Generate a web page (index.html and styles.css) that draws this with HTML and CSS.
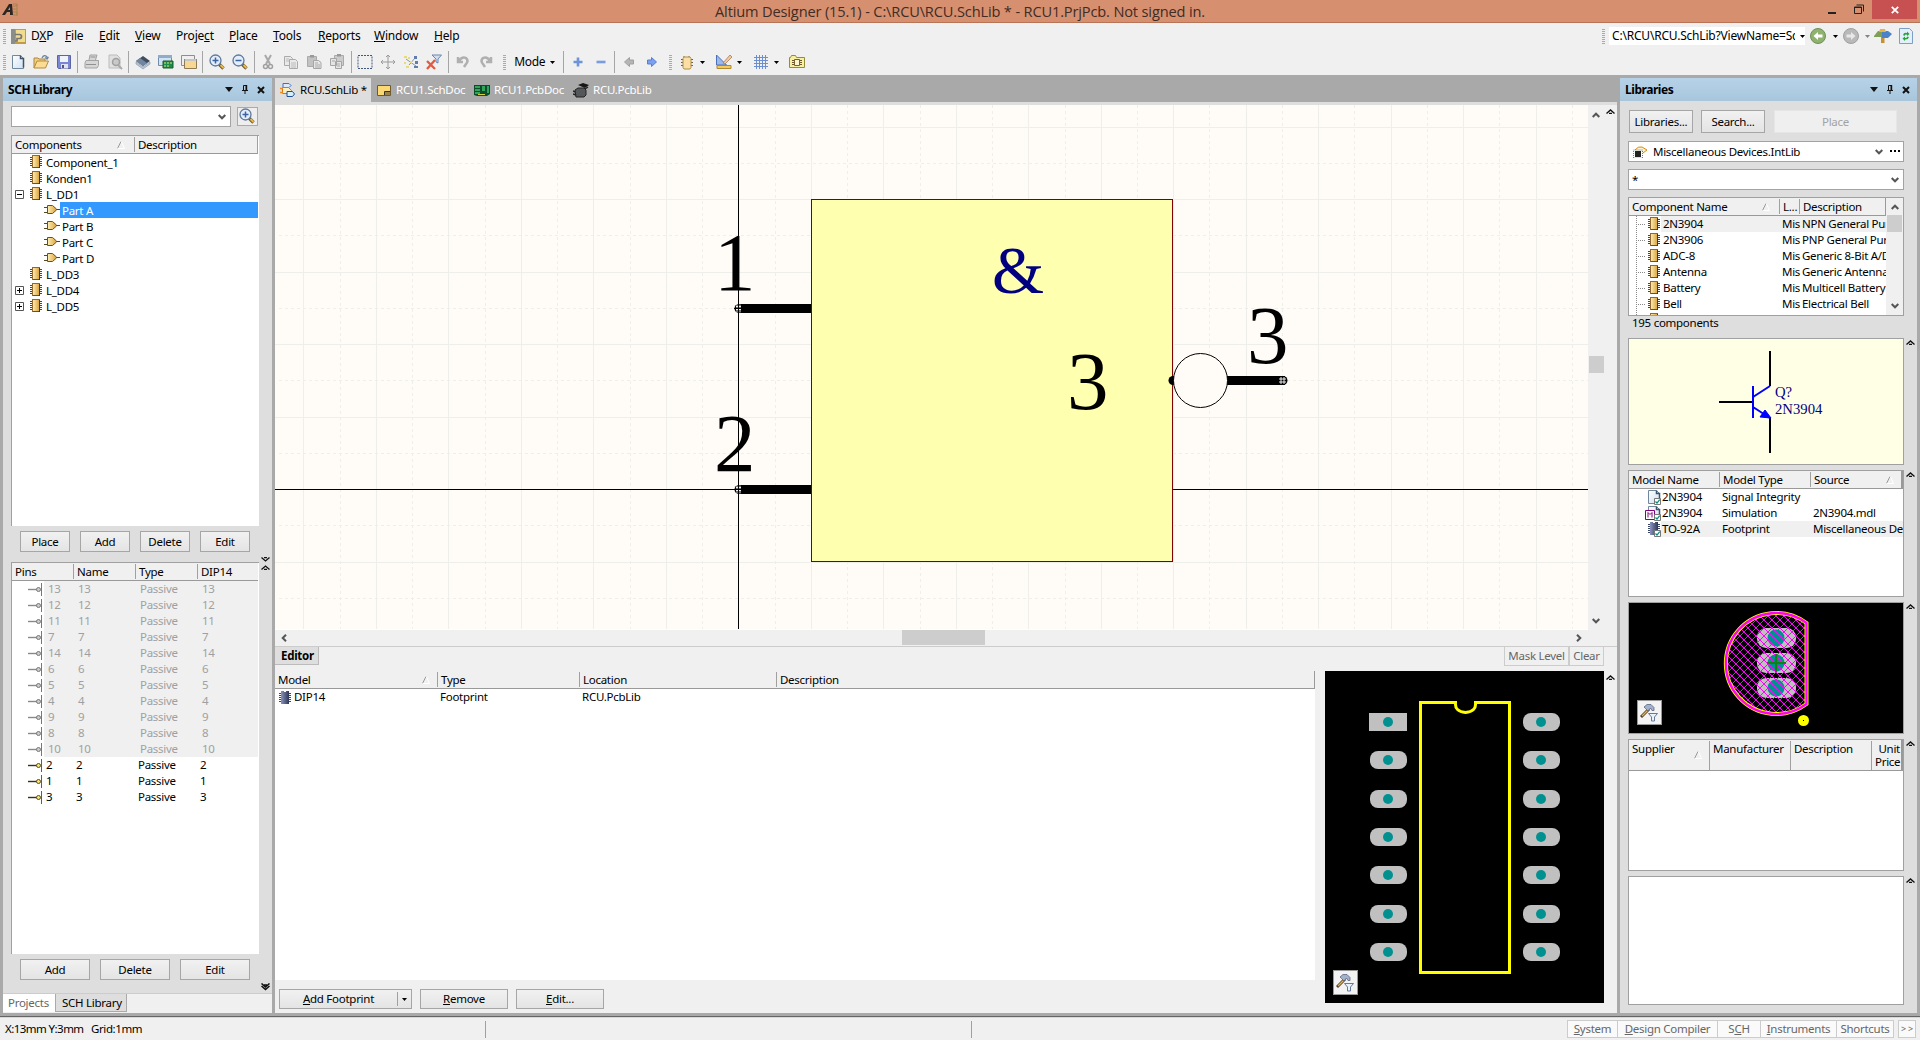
FILE: index.html
```html
<!DOCTYPE html>
<html lang="en">
<head>
<meta charset="utf-8">
<title>Altium Designer</title>
<link rel="stylesheet" href="styles.css">
</head>
<body>
<svg class="defs" width="0" height="0" aria-hidden="true">
  <defs>
    <linearGradient id="gold" x1="0" x2="1"><stop offset="0" stop-color="#fdf0b8"/><stop offset="1" stop-color="#dca23c"/></linearGradient>
    <linearGradient id="navy" x1="0" x2="1"><stop offset="0" stop-color="#8a93bd"/><stop offset="1" stop-color="#2c3858"/></linearGradient>
    <linearGradient id="page" x1="0" y1="0" x2="1" y2="1"><stop offset="0" stop-color="#fff"/><stop offset="1" stop-color="#cfe0f2"/></linearGradient>
    <symbol id="chip" viewBox="0 0 12 13"><path d="M0 2.5h12M0 4.5h12M0 6.5h12M0 8.5h12M0 10.5h12" stroke="#5a4624"/><rect x="2.5" y=".5" width="7" height="12" fill="url(#gold)" stroke="#94682a"/><path d="M9.5 1v12H3" fill="none" stroke="#4a3414"/></symbol>
    <symbol id="chipblue" viewBox="0 0 12 13"><path d="M0 2.5h12M0 4.5h12M0 6.5h12M0 8.5h12M0 10.5h12" stroke="#3c4566"/><path d="M2 0h3v1h2V0h3v13H2z" fill="url(#navy)"/></symbol>
    <symbol id="gate" viewBox="0 0 16 10"><path d="M0 2.5h4M0 7.5h4M12 4.5h4" stroke="#5a4624"/><path d="M3.5.5h5l4 3.5v1l-4 3.500h-5z" fill="url(#gold)" stroke="#6d4d20"/></symbol>
    <symbol id="pin" viewBox="0 0 14 13"><path d="M0 6.500h9" stroke="#3a3020" stroke-width="1.4"/><circle cx="10.500" cy="6.500" r="2" fill="#f4e878" stroke="#5a4a20"/><path d="M13.500 0v13" stroke="#6b5a48"/></symbol>
    <symbol id="pinoff" viewBox="0 0 14 13"><path d="M0 6.500h9" stroke="#888" stroke-width="1.4"/><circle cx="10.500" cy="6.500" r="2" fill="#ccc" stroke="#777"/><path d="M13.500 0v13" stroke="#777"/></symbol>
    <symbol id="down" viewBox="0 0 8 6"><path d="M.7 1 4 4.300 7.300 1" fill="none" stroke="#555" stroke-width="2"/></symbol>
    <symbol id="up" viewBox="0 0 8 6"><path d="M.7 5 4 1.700 7.300 5" fill="none" stroke="#555" stroke-width="2"/></symbol>
    <symbol id="fold" viewBox="0 0 9 5"><path d="M.5 4.500 4.500.9l4 3.600M3 4.500h3" fill="none" stroke="#111" stroke-width="1.300"/></symbol>
    <symbol id="caret" viewBox="0 0 5 3"><path d="M0 0h5L2.500 3z" fill="#000"/></symbol>
    <symbol id="sort" viewBox="0 0 8 8"><path d="M.5 7.500 4 .5" stroke="#999"/><path d="m4.300.5 3.200 7H.5" fill="none" stroke="#fff"/></symbol>
    <symbol id="menutri" viewBox="0 0 8 5"><path d="M0 0h8L4 5z" fill="#111"/></symbol>
    <symbol id="tack" viewBox="0 0 8 9"><path d="M1 5.500h6M4 5.500V9M2.500 5V.5h3V5" fill="none" stroke="#111"/><path d="M4.500 0h1.700v5H4.500z" fill="#111"/></symbol>
    <symbol id="cross" viewBox="0 0 8 8"><path d="m1 1 6 6M7 1 1 7" stroke="#111" stroke-width="2"/></symbol>
    <symbol id="lens" viewBox="0 0 16 16"><path d="m9.500 9.500 5 5" stroke="#6d5a30" stroke-width="3.400"/><path d="m11.500 11 3 3" stroke="#e8b93e" stroke-width="2"/><circle cx="6.500" cy="6.500" r="5.500" fill="#e3eefb" stroke="#60789c" stroke-width="1.300"/></symbol>
    <symbol id="leaf" viewBox="0 0 14 15"><path d="M1.500 1.500h8l3 3v10h-11z" fill="url(#page)" stroke="#71879e"/><path d="M9.500 1.500v3h3v9" fill="none" stroke="#3c536e" stroke-width="1.500"/></symbol>
    <symbol id="checked" viewBox="0 0 7 7"><path d="M.5.500h6v6h-6z" fill="#fff" stroke="#777"/><path d="m1.500 3.500 1.500 1.600L5.700 1.700" fill="none" stroke="#078a80" stroke-width="1.300"/></symbol>
    <symbol id="hammer" viewBox="0 0 18 18"><path d="m1 13 8-8" stroke="#443a34" stroke-width="3"/><path d="m2 12 6-6" stroke="#e4b050" stroke-width="1.400"/><path d="m4 3 3-2.500h4l3 3v3h-2L10.500 4 8 7 5.500 4.500z" fill="#a3b2ca" stroke="#4a5a78" stroke-width=".7"/><path d="M8.500 9.500h9l-3 3.500v4h-3v-4z" fill="#eaf1fa" stroke="#667a9a"/></symbol>
    <symbol id="plusbox" viewBox="0 0 9 9"><path d="M.5.500h8v8h-8z" fill="#fff" stroke="#555"/><path d="M2 4.500h5M4.500 2v5" stroke="#000"/></symbol>
    <symbol id="minusbox" viewBox="0 0 9 9"><path d="M.5.500h8v8h-8z" fill="#fff" stroke="#555"/><path d="M2 4.500h5" stroke="#000"/></symbol>
  </defs>
</svg>

<header class="titlebar">
  <svg class="logo" viewBox="0 0 16 16" width="16" height="16"><path d="M0 13 7 2h3l1 11H8v-3H5l-2 3z" fill="#2a2723"/><path d="M6 8h2V5z" fill="#d69070"/><path d="M11 2h4v2h-4m0 3h4m-4 3h4v3h-4M15 2v12" fill="none" stroke="#a8854c"/></svg>
  <h1>Altium Designer (15.1) - C:\RCU\RCU.SchLib * - RCU1.PrjPcb. Not signed in.</h1>
  <div class="winbtns">
    <svg viewBox="0 0 10 11" width="10" height="11"><path d="M1 9h8" stroke="#222" stroke-width="2"/></svg>
    <svg viewBox="0 0 10 10" width="10" height="10"><path d="M.5 3h7v6.500h-7zM.5 3.500h7M2.500 1h7v6.500" fill="none" stroke="#222"/></svg>
    <span class="close"><svg viewBox="0 0 8 8" width="8" height="8"><path d="m.8.800 6.400 6.400M7.200.800.800 7.200" stroke="#fff" stroke-width="1.800"/></svg></span>
  </div>
</header>

<nav class="menubar">
  <i class="grip"></i>
  <svg class="dxp" viewBox="0 0 15 15" width="15" height="15"><path d="M0 0h15v15H0z" fill="#c29b44"/><path d="M5 1h9v12H5z" fill="#f1dc8e"/><path d="M0 0h4v15H0z" fill="#8b8d88"/><path d="M4 5.500h4.500q2 0 2 2t-2 2H6V12H4" fill="none" stroke="#777" stroke-width="1.700"/></svg>
  <div class="menus"><span>D<u>X</u>P</span><span><u>F</u>ile</span><span><u>E</u>dit</span><span><u>V</u>iew</span><span>Proje<u>c</u>t</span><span><u>P</u>lace</span><span><u>T</u>ools</span><span><u>R</u>eports</span><span><u>W</u>indow</span><span><u>H</u>elp</span></div>
  <div class="address">
    <i class="grip"></i>
    <div class="path"><span>C:\RCU\RCU.SchLib?ViewName=Sch</span><svg width="5" height="3"><use href="#caret"/></svg></div>
    <svg class="ball" viewBox="0 0 16 16" width="16" height="16"><circle cx="8" cy="8" r="7.500" fill="#8fb270" stroke="#6f9057"/><path d="M3.500 8 8 4v2.500h4.500v3H8V12z" fill="#fff"/></svg>
    <svg class="c1" width="5" height="3"><use href="#caret"/></svg>
    <svg class="ball" viewBox="0 0 16 16" width="16" height="16"><circle cx="8" cy="8" r="7.500" fill="#b9b9b9" stroke="#a0a0a0"/><path d="M12.500 8 8 4v2.500H3.500v3H8V12z" fill="#e8e8e8"/></svg>
    <svg class="c2" width="5" height="3" opacity=".45"><use href="#caret"/></svg>
    <svg viewBox="0 0 18 16" width="18" height="16"><path d="M7 1h3.500v14H7z" fill="#c9912e"/><path d="m0 8 4-5h5l-1 6H0z" fill="#7fa052"/><path d="M8 3h6l4 3-4 4H8z" fill="#4c82c8"/><path d="M6 1h5l1 3H5z" fill="#e5b44c"/></svg>
    <svg class="refresh" viewBox="0 0 14 16" width="14" height="16"><path d="M.5.500h10l3 3v12H.5z" fill="#e3effa" stroke="#7d9fc4"/><path d="M4 7q1-3 4-2V3.500L10.500 6 8 8V6.700Q6 6 5.500 8zM10 9q-1 3-4 2.500V13l-2.500-2.500L6 8.500v1.300q2 .5 2.500-1.300z" fill="#27a535"/></svg>
  </div>
</nav>

<div class="toolbar">
  <i class="grip"></i>
  <div class="tools">
    <svg viewBox="0 0 16 16"><use href="#leaf" x="1" width="14" height="15"/></svg>
    <svg viewBox="0 0 16 16"><path d="M1 14V4h4l1 1h6v3" fill="#f6cf7a" stroke="#a98842"/><path d="m1 14 3-7h11.500l-3 7z" fill="#fbdc94" stroke="#b18b40"/><path d="M9 4q2-4 5-1v2m-2-1.500L14 5l1.500-2" fill="none" stroke="#6f86a8" stroke-width="1.300"/></svg>
    <svg viewBox="0 0 16 16"><path d="M1.500 1.500h13v13h-12l-1-1z" fill="#7b86d4" stroke="#5b659e"/><path d="M4 2h8v6H4z" fill="#f0f3fb"/><path d="M5 10h7v4.500H5z" fill="#dfe3ef"/><path d="M6 11h2v3H6z" fill="#4f5680"/></svg>
    <i class="sep"></i>
    <svg viewBox="0 0 16 16"><path d="m5 6 1-5h7l-1.500 5M2 6.500h12.500v5L13 14H1V9z" fill="#d6d6d6" stroke="#a3a3a3"/><path d="M2 10.500h10M6.500 3h5" stroke="#909090"/></svg>
    <svg viewBox="0 0 16 16"><path d="M2 1h8l3 3v10H2z" fill="#e0e0e0" stroke="#bcbcbc"/><circle cx="9" cy="8" r="3.500" fill="#c9c9c9" stroke="#a0a0a0" stroke-width="1.500"/><path d="m11 11 4 4" stroke="#aaa" stroke-width="2"/></svg>
    <i class="sep"></i>
    <svg viewBox="0 0 16 16"><path d="m1 8 7 5 7-5v2l-7 5-7-5z" fill="#b9c9da" stroke="#7f93a8" stroke-width=".6"/><path d="m1 7 7-5 7 5-7 5z" fill="#3d4c60"/><path d="m1 7 4-3 7 5-4 3z" fill="#72869e"/></svg>
    <svg viewBox="0 0 16 16"><path d="M.5 1.500h13v10H.5z" fill="#cfe3f4" stroke="#6f8caa"/><path d="M0 1h14v3H0z" fill="#8fadca"/><path d="M5 7h10v7H5z" fill="#1f8d4a" stroke="#145c30"/><path d="M6 9h2m1 0h2m1 0h2M6 12h2m1 0h2" stroke="#e6e27c"/></svg>
    <svg viewBox="0 0 16 16"><path d="M.5 1.500h13V5M.5 1.500v10H3" fill="#eee" stroke="#8e8e8e"/><path d="M3.500 5.500h12v9h-12z" fill="#f7d792" stroke="#8e7b56"/><path d="M3 5h13v2H3z" fill="#8a8a8a"/><path d="M4 6h11" stroke="#fff"/></svg>
    <i class="sep"></i>
    <svg viewBox="0 0 16 16"><use href="#lens" width="16" height="16"/><path d="M3.500 6.500h6m-3-3v6" stroke="#3b62a4" stroke-width="1.500"/></svg>
    <svg viewBox="0 0 16 16"><use href="#lens" width="16" height="16"/><path d="M3.500 6.500h6" stroke="#3b62a4" stroke-width="1.500"/></svg>
    <i class="sep"></i>
    <svg viewBox="0 0 16 16"><path d="m5 1 5 9M11 1l-5 9" stroke="#a8a8a8" stroke-width="2"/><circle cx="5.500" cy="12.500" r="2" fill="none" stroke="#a0a0a0" stroke-width="1.500"/><circle cx="10.500" cy="12.500" r="2" fill="none" stroke="#a0a0a0" stroke-width="1.500"/></svg>
    <svg viewBox="0 0 16 16"><path d="M1.500 2.500h6l2 2v7h-8z" fill="#e9e9e9" stroke="#aaa"/><path d="M6.500 5.500h6l2 2v7h-8z" fill="#e9e9e9" stroke="#aaa"/><path d="M8 9h5m-5 2h5m-5 2h5M3 5h3M3 7h3" stroke="#bbb"/></svg>
    <svg viewBox="0 0 16 16"><path d="M1.500 2.500h9v10h-9z" fill="#c2c2c2" stroke="#aaa"/><path d="M4 1h4v2.500H4z" fill="#999"/><path d="M7.500 6.500h5l2.500 2v6H7.500z" fill="#e6e6e6" stroke="#a5a5a5"/><path d="M9 9h3m-3 2h5m-5 2h5" stroke="#aaa"/></svg>
    <svg viewBox="0 0 16 16"><path d="M5.500 1.500h9v10h-9z" fill="#ccc" stroke="#aaa"/><path d="M8 0h4v2.500H8z" fill="#999"/><path d="M1.500 4.500h6v7h-6zM6.500 7.500h6v7h-6z" fill="#e4e4e4" stroke="#a5a5a5"/><path d="M8 10h3m-3 2h3M3 7h3" stroke="#aaa"/></svg>
    <i class="sep"></i>
    <svg viewBox="0 0 16 16"><path d="M1 1.500h14v13H1z" fill="none" stroke="#41587e" stroke-dasharray="2 1"/></svg>
    <svg viewBox="0 0 16 16"><path d="M1 8h14M8 1v14M6 3l2-2 2 2M6 13l2 2 2-2M3 6 1 8l2 2M13 6l2 2-2 2" fill="none" stroke="#9b9b9b"/></svg>
    <svg viewBox="0 0 16 16"><path d="m3 5 10 7M6 11l6-7" stroke="#8a94a4"/><path d="M1 2h3v2H1zm4 1h2v2H5zM1 8h2v2H1zm2 4h3v2H3zm4-5h2v2H7z" fill="#e8dc78"/><path d="M11 2h3v3h-3zm1 5h3v3h-3zm-1 5h4v2h-4z" fill="#5e7cae"/></svg>
    <svg viewBox="0 0 16 16"><path d="M6 1h9.500L12 5v4L10 8V5z" fill="#cfdff2" stroke="#6c87ad"/><path d="m1 7 8 8M9 6l-8 9" stroke="#e05a44" stroke-width="2.300"/></svg>
    <i class="sep"></i>
    <svg viewBox="0 0 16 16"><path d="M3 3v5h5M4 7q3-5 7-3 3 3 0 6l-2 3" fill="none" stroke="#b0b0b0" stroke-width="2.500"/></svg>
    <svg viewBox="0 0 16 16"><path d="M13 3v5H8M12 7Q9 2 5 4q-3 3 0 6l2 3" fill="none" stroke="#b0b0b0" stroke-width="2.500"/></svg>
  </div>
  <i class="grip g2"></i>
  <span class="mode">Mode</span><svg class="mc" width="5" height="3"><use href="#caret"/></svg>
  <i class="sep"></i>
  <div class="tools">
    <svg viewBox="0 0 16 16"><path d="M3.500 8h9M8 3.500v9" stroke="#6f93d8" stroke-width="2.600"/></svg>
    <svg viewBox="0 0 16 16"><path d="M3.500 8h9" stroke="#7b9ce0" stroke-width="2.600"/></svg>
    <i class="sep"></i>
    <svg viewBox="0 0 16 16"><path d="m3.500 8 5-4.500V6h4v4h-4v2.500z" fill="#b5b5b5" stroke="#a0a0a0"/></svg>
    <svg viewBox="0 0 16 16"><path d="m12.500 8-5-4.500V6h-4v4h4v2.500z" fill="#7ba0f0" stroke="#5a7fd0"/></svg>
  </div>
  <i class="grip g3"></i>
  <div class="drops">
    <svg viewBox="0 0 16 16" width="16" height="16"><path d="M2 5.500h12M2 8.500h12M2 11.500h12M5 2v2m5-2v2" stroke="#6b6248"/><path d="M4 4.500 5 3h6l1 1.500v9L11 15H5l-1-1.500z" fill="#fbdfa4" stroke="#b48c4a"/></svg>
    <svg width="5" height="3"><use href="#caret"/></svg>
    <svg viewBox="0 0 16 16" width="16" height="16"><path d="M.5 1v10h10z" fill="#9db9ea" stroke="#4a70b8"/><path d="m7 9 7-8 2 2-7 7z" fill="#f0c9a0" stroke="#a0704a" stroke-width=".7"/><path d="M1 11.500h14v3H1z" fill="#f5c95a" stroke="#b08a30"/></svg>
    <svg width="5" height="3"><use href="#caret"/></svg>
    <svg viewBox="0 0 16 16" width="16" height="16"><path d="M1 3.500h14M1 6.500h14M1 9.500h14M1 12.500h14M3.500 1v14M6.500 1v14M9.500 1v14M12.500 1v14" stroke="#6d8fd0"/></svg>
    <svg width="5" height="3"><use href="#caret"/></svg>
    <svg viewBox="0 0 16 16" width="16" height="16"><path d="M.5 3.500h1l1-2h4l1 2h8v10H.5z" fill="#f7f0a0" stroke="#948a3c"/><path d="M3 6.500h10M3 8.500h10M3 10.500h10" stroke="#6b5a30"/><path d="M5.500 5.500h5v6h-5z" fill="#fdf6d0" stroke="#7a6030"/></svg>
  </div>
</div>

<main class="work">
  <aside class="panel left">
    <div class="panelhead"><b>SCH Library</b><svg width="8" height="5"><use href="#menutri"/></svg><svg width="8" height="9"><use href="#tack"/></svg><svg width="8" height="8"><use href="#cross"/></svg></div>
    <div class="search"><div class="combo"><svg width="8" height="6"><use href="#down"/></svg></div><span class="lensbtn"><svg width="16" height="16" viewBox="0 0 16 16"><use href="#lens" width="16" height="16"/><path d="M3.500 6.500h6m-3-3v6" stroke="#3b62a4" stroke-width="1.500"/></svg></span></div>
    <div class="grid tree">
      <div class="thead"><span>Components<svg class="sort" width="8" height="8"><use href="#sort"/></svg></span><span>Description</span></div>
      <ul>
        <li><i></i><svg width="12" height="13"><use href="#chip"/></svg><span>Component_1</span></li>
        <li><i></i><svg width="12" height="13"><use href="#chip"/></svg><span>Konden1</span></li>
        <li><i><svg width="9" height="9"><use href="#minusbox"/></svg></i><svg width="12" height="13"><use href="#chip"/></svg><span>L_DD1</span></li>
        <li class="part on"><svg width="16" height="10"><use href="#gate"/></svg><span>Part A</span></li>
        <li class="part"><svg width="16" height="10"><use href="#gate"/></svg><span>Part B</span></li>
        <li class="part"><svg width="16" height="10"><use href="#gate"/></svg><span>Part C</span></li>
        <li class="part"><svg width="16" height="10"><use href="#gate"/></svg><span>Part D</span></li>
        <li><i></i><svg width="12" height="13"><use href="#chip"/></svg><span>L_DD3</span></li>
        <li><i><svg width="9" height="9"><use href="#plusbox"/></svg></i><svg width="12" height="13"><use href="#chip"/></svg><span>L_DD4</span></li>
        <li><i><svg width="9" height="9"><use href="#plusbox"/></svg></i><svg width="12" height="13"><use href="#chip"/></svg><span>L_DD5</span></li>
      </ul>
    </div>
    <div class="btnrow four"><button>Place</button><button>Add</button><button>Delete</button><button>Edit</button></div>
    <div class="pinwrap">
      <div class="grid pins">
        <div class="thead"><span>Pins</span><span>Name</span><span>Type</span><span>DIP14</span></div>
        <div class="prow off"><svg width="14" height="13"><use href="#pinoff"/></svg><span>13</span><span>13</span><span>Passive</span><span>13</span></div>
        <div class="prow off"><svg width="14" height="13"><use href="#pinoff"/></svg><span>12</span><span>12</span><span>Passive</span><span>12</span></div>
        <div class="prow off"><svg width="14" height="13"><use href="#pinoff"/></svg><span>11</span><span>11</span><span>Passive</span><span>11</span></div>
        <div class="prow off"><svg width="14" height="13"><use href="#pinoff"/></svg><span>7</span><span>7</span><span>Passive</span><span>7</span></div>
        <div class="prow off"><svg width="14" height="13"><use href="#pinoff"/></svg><span>14</span><span>14</span><span>Passive</span><span>14</span></div>
        <div class="prow off"><svg width="14" height="13"><use href="#pinoff"/></svg><span>6</span><span>6</span><span>Passive</span><span>6</span></div>
        <div class="prow off"><svg width="14" height="13"><use href="#pinoff"/></svg><span>5</span><span>5</span><span>Passive</span><span>5</span></div>
        <div class="prow off"><svg width="14" height="13"><use href="#pinoff"/></svg><span>4</span><span>4</span><span>Passive</span><span>4</span></div>
        <div class="prow off"><svg width="14" height="13"><use href="#pinoff"/></svg><span>9</span><span>9</span><span>Passive</span><span>9</span></div>
        <div class="prow off"><svg width="14" height="13"><use href="#pinoff"/></svg><span>8</span><span>8</span><span>Passive</span><span>8</span></div>
        <div class="prow off"><svg width="14" height="13"><use href="#pinoff"/></svg><span>10</span><span>10</span><span>Passive</span><span>10</span></div>
        <div class="prow"><svg width="14" height="13"><use href="#pin"/></svg><span>2</span><span>2</span><span>Passive</span><span>2</span></div>
        <div class="prow"><svg width="14" height="13"><use href="#pin"/></svg><span>1</span><span>1</span><span>Passive</span><span>1</span></div>
        <div class="prow"><svg width="14" height="13"><use href="#pin"/></svg><span>3</span><span>3</span><span>Passive</span><span>3</span></div>
      </div>
      <svg class="splitmark" viewBox="0 0 9 13" width="9" height="13"><path d="M.5.500 4.500 4l4-3.500M3 .5h3M.5 12.500l4-3.500 4 3.500M3 12.500h3" fill="none" stroke="#111" stroke-width="1.300"/></svg>
    </div>
    <div class="btnrow three"><button>Add</button><button>Delete</button><button>Edit</button></div>
    <svg class="more" viewBox="0 0 9 8" width="9" height="8"><path d="M.5.500 4.500 4l4-3.500M.5 3l4 3.500L8.500 3M3 2h3" fill="none" stroke="#111" stroke-width="1.500"/></svg>
    <div class="ptabs"><span>Projects</span><span class="cur">SCH Library</span></div>
  </aside>

  <section class="center">
    <div class="doctabs">
      <span class="tab cur"><svg viewBox="0 0 16 16" width="16" height="16"><path d="M3 1.500h6l2 2-2 2H3z" fill="#dce8fb" stroke="#3b6fd0"/><path d="M2.500 5.500h6l3 3-3 3h-6z" fill="#fdeec4" stroke="#c87a14"/><path d="M0 6.500h3m-3 4h3" stroke="#f08a1c" stroke-width="1.500"/><path d="M7 9.500h5.500l2 2.500-2 2.500H7z" fill="#d4f0fa" stroke="#1c4f98"/></svg>RCU.SchLib *</span>
      <span class="tab"><svg viewBox="0 0 16 16" width="16" height="16"><path d="M1.500 3.500h13v10h-13z" fill="#fbd874" stroke="#6d5a30"/><path d="M9 10h5M8.500 13V9.500H14M9 12h5" stroke="#3a3020" fill="none"/></svg>RCU1.SchDoc</span>
      <span class="tab"><svg viewBox="0 0 16 16" width="16" height="16"><path d="M0 3h16v9l-3 2H3l-3-1z" fill="#0e4c2a"/><path d="M1 4h5v2H1zm0 3h5v2H1zm0 3h5v2H1zm7-6h3v5H8zm5 0h2v7h-2z" fill="#2fa45c"/><path d="M4 12.500h7" stroke="#cfd03c"/></svg>RCU1.PcbDoc</span>
      <span class="tab"><svg viewBox="0 0 16 16" width="16" height="16"><path d="m2 8 3-2h6l2 2v5l-2 2H3z" fill="#55585a" stroke="#222"/><path d="m0 9 2 1M0 12l3 1M15 5l-3 2" stroke="#222" stroke-width="1.500"/><path d="m5 3 5-2 6 2-4 3z" fill="#161616"/></svg>RCU.PcbLib</span>
    </div>
    <div class="canvasrow">
      <svg class="canvas" viewBox="275 105 1313 525" width="1313" height="525">
        <rect x="275" y="105" width="1313" height="525" fill="#fffcf7"/>
        <g stroke="#eeeeea" shape-rendering="crispEdges">
          <path d="M303.500 105v525M376.500 105v525M448.500 105v525M521.500 105v525M593.500 105v525M666.500 105v525M811.500 105v525M883.500 105v525M956.500 105v525M1028.500 105v525M1101.500 105v525M1173.500 105v525M1246.500 105v525M1318.500 105v525M1391.500 105v525M1463.500 105v525M1536.500 105v525"/>
          <path d="M275 127.500h1313M275 199.500h1313M275 272.500h1313M275 344.500h1313M275 417.500h1313M275 562.500h1313"/>
          <g stroke-dasharray="3 3"><path d="M340.500 105v525M412.500 105v525M485.500 105v525M557.500 105v525M630.500 105v525M702.500 105v525M775.500 105v525M847.500 105v525M920.500 105v525M992.500 105v525M1065.500 105v525M1137.500 105v525M1209.500 105v525M1282.500 105v525M1354.500 105v525M1427.500 105v525M1499.500 105v525M1572.500 105v525"/>
          <path d="M279 163.500h1309M279 235.500h1309M279 308.500h1309M279 380.500h1309M279 453.500h1309M279 525.500h1309M279 598.500h1309"/></g>
        </g>
        <path d="M738.500 105v525M275 489.500h1313" stroke="#000"/>
        <path d="M275 629.500h1313" stroke="#fff"/>
        <rect x="811.500" y="199.500" width="361" height="362" fill="#ffffb0" stroke="#800000"/>
        <g stroke="#000" stroke-width="9"><path d="M740 308.500h71M740 489.500h71M1227 380.500h58"/></g>
        <circle cx="739" cy="308.500" r="4.500"/><circle cx="739" cy="489.500" r="4.500"/><circle cx="1283" cy="380.500" r="4.500"/><circle cx="1173" cy="380.500" r="4.500"/>
        <path d="M736 306.500h5m-5 3h5m-4-5v8m3-8v8M736 487.500h5m-5 3h5m-4-5v8m3-8v8M1279 379h7m-7 3h7m-5-5v7m3-7v7" stroke="#fff" stroke-width=".9"/>
        <path d="M734 308.500h8m-3.500-4v8M734 489.500h8m-3.500-4v8" stroke="#000"/>
        <circle cx="1200.500" cy="380.500" r="27" fill="#fffcf7" stroke="#000" stroke-width="1"/>
        <g class="pintext"><text x="714" y="290">1</text><text x="714" y="471">2</text><text x="1067" y="408.500">3</text><text x="1247" y="362.500">3</text></g>
        <text class="amp" x="992" y="293">&amp;</text>
      </svg>
      <div class="vbar"><svg width="8" height="6"><use href="#up"/></svg><i></i><svg width="8" height="6"><use href="#down"/></svg></div>
      <svg class="foldtop" width="9" height="5"><use href="#fold"/></svg>
    </div>
    <div class="hbar"><svg viewBox="0 0 6 8" width="6" height="8"><path d="M5 .7 1.700 4 5 7.300" fill="none" stroke="#555" stroke-width="2"/></svg><i></i><svg viewBox="0 0 6 8" width="6" height="8"><path d="M1 .7 4.300 4 1 7.300" fill="none" stroke="#555" stroke-width="2"/></svg></div>
    <div class="edbar"><b>Editor</b><span class="mask">Mask Level</span><span class="clear">Clear</span></div>
    <div class="edbody">
      <div class="edleft">
        <div class="models">
          <div class="thead"><span>Model<svg class="sort" width="8" height="8"><use href="#sort"/></svg></span><span>Type</span><span>Location</span><span>Description</span></div>
          <div class="mrow"><span><svg width="12" height="13"><use href="#chipblue"/></svg>DIP14</span><span>Footprint</span><span>RCU.PcbLib</span></div>
        </div>
        <div class="actions"><div class="split"><span><u>A</u>dd Footprint</span><i><svg width="5" height="3"><use href="#caret"/></svg></i></div><button><u>R</u>emove</button><button><u>E</u>dit...</button></div>
      </div>
      <div class="dip">
        <svg viewBox="1325 671 279 332" width="279" height="332">
          <rect x="1325" y="671" width="279" height="332"/>
          <path d="M1455.500 702.500h-35v270h89v-270h-34q1 9-10 10-11-1-10-10z" fill="none" stroke="#ff0" stroke-width="3"/>
          <path d="M1457 701h17v3h-17z"/>
          <g fill="#c0c0c0"><path d="M1369 713h38v18h-38z"/>
          <rect x="1370" y="751" width="37" height="18" rx="8"/><rect x="1370" y="790" width="37" height="18" rx="8"/><rect x="1370" y="828" width="37" height="18" rx="8"/><rect x="1370" y="866" width="37" height="18" rx="8"/><rect x="1370" y="905" width="37" height="18" rx="8"/><rect x="1370" y="943" width="37" height="18" rx="8"/>
          <rect x="1523" y="713" width="37" height="18" rx="8"/><rect x="1523" y="751" width="37" height="18" rx="8"/><rect x="1523" y="790" width="37" height="18" rx="8"/><rect x="1523" y="828" width="37" height="18" rx="8"/><rect x="1523" y="866" width="37" height="18" rx="8"/><rect x="1523" y="905" width="37" height="18" rx="8"/><rect x="1523" y="943" width="37" height="18" rx="8"/></g>
          <g fill="#009090"><circle cx="1388" cy="722" r="5"/><circle cx="1388" cy="760" r="5"/><circle cx="1388" cy="799" r="5"/><circle cx="1388" cy="837" r="5"/><circle cx="1388" cy="875" r="5"/><circle cx="1388" cy="914" r="5"/><circle cx="1388" cy="952" r="5"/><circle cx="1541" cy="722" r="5"/><circle cx="1541" cy="760" r="5"/><circle cx="1541" cy="799" r="5"/><circle cx="1541" cy="837" r="5"/><circle cx="1541" cy="875" r="5"/><circle cx="1541" cy="914" r="5"/><circle cx="1541" cy="952" r="5"/></g>
          <rect x="1333.500" y="970.500" width="24" height="24" fill="#f3f3f3" stroke="#999"/><use href="#hammer" x="1336" y="974" width="18" height="18"/>
        </svg>
      </div>
      <svg class="foldtop" width="9" height="5"><use href="#fold"/></svg>
    </div>
  </section>

  <aside class="panel right">
    <div class="panelhead"><b>Libraries</b><svg width="8" height="5"><use href="#menutri"/></svg><svg width="8" height="9"><use href="#tack"/></svg><svg width="8" height="8"><use href="#cross"/></svg></div>
    <div class="libbtns"><button>Libraries...</button><button>Search...</button><button class="dis">Place</button></div>
    <div class="combo lib"><svg viewBox="0 0 16 12" width="16" height="12"><path d="M2 4q3-4 7-3l5 3-4 3" fill="#fdf3d0" stroke="#d88a14"/><path d="M.5 4h9v8h-9z" fill="none" stroke="#5b83c4" stroke-dasharray="1 1"/><path d="M2 5h6v6H2z" fill="#222"/></svg><span>Miscellaneous Devices.IntLib</span><svg width="8" height="6"><use href="#down"/></svg><svg viewBox="0 0 10 2" width="10" height="2"><path d="M0 0h2v2H0zM4 0h2v2H4zM8 0h2v2H8z"/></svg></div>
    <div class="combo mask2"><span>*</span><svg width="8" height="6"><use href="#down"/></svg></div>
    <div class="box comps">
      <div class="clist">
        <div class="thead"><span>Component Name<svg class="sort" width="8" height="8"><use href="#sort"/></svg></span><span>L...</span><span>Description</span></div>
        <div class="crow sel"><svg width="12" height="13"><use href="#chip"/></svg><span>2N3904</span><span>Mis</span><span>NPN General Pur</span></div>
        <div class="crow"><svg width="12" height="13"><use href="#chip"/></svg><span>2N3906</span><span>Mis</span><span>PNP General Pur</span></div>
        <div class="crow"><svg width="12" height="13"><use href="#chip"/></svg><span>ADC-8</span><span>Mis</span><span>Generic 8-Bit A/D</span></div>
        <div class="crow"><svg width="12" height="13"><use href="#chip"/></svg><span>Antenna</span><span>Mis</span><span>Generic Antenna</span></div>
        <div class="crow"><svg width="12" height="13"><use href="#chip"/></svg><span>Battery</span><span>Mis</span><span>Multicell Battery</span></div>
        <div class="crow"><svg width="12" height="13"><use href="#chip"/></svg><span>Bell</span><span>Mis</span><span>Electrical Bell</span></div>
        <div class="crow"><svg width="12" height="13"><use href="#chip"/></svg></div>
      </div>
      <div class="cbar"><svg width="8" height="6"><use href="#up"/></svg><i></i><svg width="8" height="6"><use href="#down"/></svg></div>
    </div>
    <p class="count">195 components</p>
    <div class="rowbox sym"><div class="box"><svg viewBox="1629 339 274 125" width="274" height="125"><rect x="1629" y="339" width="274" height="125" fill="#ffffe6"/><path d="M1770 351v35M1719 402h34M1770 418v35" stroke="#000" stroke-width="2"/><path d="M1753 386v32M1753 397l17-11M1753 407l17 11" stroke="#00f" stroke-width="2"/><path d="m1771 418-11-1 5-7z" fill="#00f" stroke="#00f"/><text x="1775" y="397">Q?</text><text x="1775" y="413.500">2N3904</text></svg></div><svg class="fold" width="9" height="5"><use href="#fold"/></svg></div>
    <div class="rowbox mod"><div class="box">
      <div class="thead"><span>Model Name</span><span>Model Type</span><span>Source<svg class="sort" width="8" height="8"><use href="#sort"/></svg></span></div>
      <div class="modrow"><svg viewBox="0 0 16 16" width="16" height="16"><use href="#leaf" x="2" width="14" height="15"/><use href="#checked" x="9" y="9" width="7" height="7"/></svg><span>2N3904</span><span>Signal Integrity</span><span></span></div>
      <div class="modrow"><svg viewBox="0 0 16 16" width="16" height="16"><use href="#leaf" x="2" width="14" height="15"/><path d="M.5 5.500h9v9h-9z" fill="#fff" stroke="#800080"/><path d="M3 12.500V7.500l2 2 2-2v5" fill="none" stroke="#800080"/><use href="#checked" x="9" y="9" width="7" height="7"/></svg><span>2N3904</span><span>Simulation</span><span>2N3904.mdl</span></div>
      <div class="modrow sel"><svg viewBox="0 0 16 16" width="16" height="16"><use href="#chipblue" x="3" y="1" width="12" height="13"/><use href="#checked" x="9" y="9" width="7" height="7"/></svg><span>TO-92A</span><span>Footprint</span><span>Miscellaneous De</span></div>
    </div><svg class="fold" width="9" height="5"><use href="#fold"/></svg></div>
    <div class="rowbox pcb"><div class="box"><svg viewBox="1629 603 274 130" width="274" height="130">
      <defs><pattern id="hatch" width="8" height="8" patternUnits="userSpaceOnUse"><path d="M0 0l8 8M8 0 0 8" stroke="#f0f" stroke-width="1"/></pattern></defs>
      <rect x="1629" y="603" width="274" height="130"/>
      <g fill="#c0c0c0"><rect x="1757" y="628" width="39" height="20" rx="9"/><rect x="1757" y="653" width="39" height="20" rx="9"/><rect x="1757" y="678" width="39" height="20" rx="9"/></g>
      <g fill="#009090"><circle cx="1776" cy="638" r="8.500"/><circle cx="1776" cy="663" r="8.500"/><circle cx="1776" cy="688" r="8.500"/></g>
      <path d="M1806.500 623v81A50.500 50.500 0 1 1 1806.500 623z" fill="url(#hatch)" stroke="#ff0" stroke-width="4"/>
      <path d="M1806.500 623v81A50.500 50.500 0 1 1 1806.500 623z" fill="none" stroke="#f0f" stroke-width="2.300"/>
      <path d="M1767 663h19M1776 654v18" stroke="#108010" stroke-width="2"/>
      <circle cx="1803.500" cy="720.500" r="5.500" fill="#ff0"/><path d="M1803 720h1v1h-1z"/>
      <rect x="1637.500" y="700.500" width="24" height="24" fill="#f3f3f3" stroke="#999"/><use href="#hammer" x="1640" y="704" width="18" height="18"/>
    </svg></div><svg class="fold" width="9" height="5"><use href="#fold"/></svg></div>
    <div class="rowbox sup"><div class="box"><div class="thead"><span>Supplier<svg class="sort" width="8" height="8"><use href="#sort"/></svg></span><span>Manufacturer</span><span>Description</span><span>Unit<br>Price</span></div></div><svg class="fold" width="9" height="5"><use href="#fold"/></svg></div>
    <div class="rowbox blank"><div class="box"></div><svg class="fold" width="9" height="5"><use href="#fold"/></svg></div>
  </aside>
</main>

<footer class="status">
  <span class="pos">X:13mm Y:3mm</span><span class="gridsz">Grid:1mm</span><i></i><i></i>
  <div class="pbtns"><span><u>S</u>ystem</span><span><u>D</u>esign Compiler</span><span>S<u>C</u>H</span><span><u>I</u>nstruments</span><span>Shortcuts</span></div><span class="gt">&gt; &gt;</span>
</footer>
</body>
</html>
```
FILE: styles.css
```css
* { box-sizing: border-box; }
body { margin: 0; width: 1920px; height: 1040px; overflow: hidden; display: flex; flex-direction: column; background: #f0f0f0; font: 11.500px/16px "Noto Sans", "Open Sans", sans-serif; letter-spacing: -.27px; color: #000; white-space: nowrap; }
svg { display: block; flex: none; }
.defs { position: absolute; }
i { font-style: normal; }
u { text-underline-offset: 1px; text-decoration-thickness: 1px; }
button { font: inherit; letter-spacing: inherit; color: #000; padding: 0; border: 1px solid #a6a6a6; background: linear-gradient(#f1f1f1, #e4e4e4); border-radius: 0; }

.titlebar { height: 23px; background: #d69070; border-bottom: 1px solid #b97458; display: grid; grid-template-columns: 300px 1fr 300px; align-items: start; }
.logo { margin: 2px 0 0 2px; }
.titlebar h1 { margin: 0; font: 14.600px/23px "Open Sans", "Noto Sans", sans-serif; letter-spacing: -.15px; color: #3f2c24; text-align: center; }
.winbtns { display: flex; justify-content: flex-end; align-items: flex-start; padding-right: 3px; }
.winbtns svg { margin: 4px 17px 0 0; }
.winbtns .close { width: 45px; height: 19px; background: #c75050; margin-left: -9px; }
.winbtns > svg + svg { margin-left: 0; }
.close svg { margin: 6px auto 0; }

.grip { width: 3px; height: 15px; background: repeating-linear-gradient(#aaa 0 1px, transparent 1px 2px); flex: none; }
.menubar { height: 26px; display: flex; align-items: center; padding-left: 3px; }
.dxp { margin: 0 5px; }
.menus { display: grid; grid-template-columns: 34px 34px 36px 41px 53px 44px 45px 56px 60px 60px; font-size: 12px; letter-spacing: -.2px; }
.address { margin-left: auto; display: flex; align-items: center; padding-right: 7px; }
.path { width: 196px; height: 18px; margin: 0 5px 0 4px; background: #fff; display: flex; align-items: center; padding-left: 3px; }
.path span { width: 183px; overflow: hidden; font-size: 12px; letter-spacing: -.2px; }
.path svg { margin-left: 5px; }
.c1 { margin: 0 5px 0 7px; }
.c2 { margin: 0 4px 0 6px; }
.refresh { margin-left: 7px; }

.toolbar { height: 26px; display: flex; align-items: center; padding-left: 3px; }
.tools { display: flex; align-items: center; }
.tools svg { width: 16px; height: 16px; margin: 0 3.500px; }
.sep { width: 1px; height: 22px; margin: 0 2.100px; background: #a5a5a5; flex: none; }
.g2 { margin: 0 8px 0 6px; }
.mode { width: 36px; font-size: 12px; }
.mc { margin-right: 6px; }
.g3 { margin: 0 7px 0 5px; }
.drops { display: grid; grid-template-columns: 21px 16px 21px 16px 21px 15px 16px; align-items: center; }

.work { flex: none; height: 942px; background: #a9a9a9; border-bottom: 1px solid #656565; padding: 3px; display: grid; grid-template-columns: 269px 1342px 297px; column-gap: 3px; }
.panel { background: #dedede; display: flex; flex-direction: column; min-height: 0; height: 935px; }
.panelhead { height: 23px; flex: none; background: linear-gradient(#b6d2e8, #a7c6dc); display: flex; align-items: center; gap: 8px; padding: 0 7px 0 5px; }
.panelhead b { margin-right: auto; font-size: 12px; letter-spacing: -.45px; }
.thead { display: grid; background: #f0f0f0; border-bottom: 1px solid #999; line-height: 16px; flex: none; }
.thead span { display: flex; align-items: center; padding-left: 3px; border-left: 1px solid #a0a0a0; margin: 1px 0; overflow: hidden; }
.thead span:first-child { border-left: 0; }
.thead .sort { margin-left: auto; margin-right: 7px; }
.combo { height: 21px; border: 1px solid #a3a3a3; background: #fff; display: flex; align-items: center; }

.search { display: flex; padding: 5px 0 0 8px; gap: 6px; }
.search .combo { width: 220px; justify-content: flex-end; padding-right: 4px; }
.lensbtn { width: 21px; height: 19px; margin-top: 1px; border: 1px solid #aaa; background: #eee; padding: 0 0 0 1px; }
.grid { margin-left: 8px; width: 248px; background: #fff; border-left: 1px solid #a0a0a0; border-top: 1px solid #a0a0a0; flex: none; }
.tree { margin-top: 8px; height: 391px; }
.tree .thead { height: 18px; width: 246px; grid-template-columns: 122px 124px; border-right: 1px solid #a0a0a0; }
.tree .thead .sort { margin-right: 9px; }
.tree ul { margin: 0; padding: 0; list-style: none; }
.tree li { height: 16px; display: flex; align-items: center; }
.tree li > i { width: 18px; padding-left: 3px; }
.tree li > svg { margin-bottom: 1px; }
.tree li > span { margin-left: 4px; height: 16px; line-height: 18px; }
.tree li.part { padding-left: 32px; }
.tree .part > span { margin-left: 0; padding-left: 2px; }
.tree .on > span { background: #3399ff; color: #fff; width: 198px; }
.btnrow { display: flex; gap: 10px; padding-left: 17px; flex: none; }
.btnrow button { height: 21px; }
.four { margin-top: 5px; }
.four button { width: 50px; }
.three { margin-top: 5px; }
.three button { width: 70px; }
.pinwrap { display: flex; align-items: flex-start; margin-top: 10px; }
.pins { height: 392px; }
.pins .thead { height: 18px; width: 246px; grid-template-columns: 61px 62px 62px 61px; }
.splitmark { margin: -5px 0 0 2px; }
.prow { height: 16px; width: 246px; display: grid; grid-template-columns: 18px 30px 62px 62px 58px; padding-left: 16px; align-items: center; }
.prow.off { color: #a0a0a0; background: linear-gradient(90deg, #fff 32px, #f0f0f0 32px); }
.prow.off span { padding-left: 2px; }
.more { margin: 3px 0 0 258px; flex: none; }
.ptabs { margin-top: auto; height: 20px; background: #f0f0f0; border-top: 1px solid #ccc; display: flex; }
.ptabs span { height: 18px; line-height: 18px; padding: 0 5px; width: 52px; background: #fff; color: #666; }
.ptabs .cur { width: 72px; padding: 0 6px; background: #dedede; color: #000; border: solid #aaa; border-width: 0 1px 1px; }

.center { background: #f0f0f0; display: flex; flex-direction: column; min-width: 0; height: 935px; }
.doctabs { height: 27px; flex: none; background: #a9a9a9; border-bottom: 3px solid #dedede; display: flex; }
.tab { display: flex; align-items: center; gap: 4px; color: #fff; padding-left: 5px; width: 99px; }
.tab.cur { width: 96px; background: #dedede; color: #000; }
.tab:nth-child(3) { width: 98px; padding-left: 4px; }
.canvasrow { display: flex; height: 525px; flex: none; }
.canvas text { font-family: "Liberation Serif", serif; letter-spacing: 0; }
.pintext { font-size: 83px; }
.amp { font-size: 67px; fill: #000080; }
.vbar { width: 16px; display: flex; flex-direction: column; align-items: center; padding: 7px 0 6px; }
.vbar i { width: 15px; height: 17px; margin: 238px 0 auto; background: #cdcdcd; }
.foldtop { margin: 4px 0 0 2px; }
.hbar { height: 16px; flex: none; display: flex; align-items: center; padding: 0 35px 1px 6px; }
.hbar i { width: 83px; height: 15px; margin: 0 auto 0 615px; background: #cdcdcd; }
.edbar { height: 25px; flex: none; border-top: 1px solid #ccc; display: flex; padding-right: 13px; }
.edbar b { width: 44px; height: 18px; padding-left: 6px; line-height: 18px; background: #dedede; border: solid #bbb; border-width: 0 1px 1px 0; }
.edbar span { height: 19px; border: 1px solid #ccc; border-top: 0; color: #666; line-height: 18px; text-align: center; }
.mask { margin-left: auto; width: 65px; }
.clear { width: 35px; }
.edbody { display: flex; align-items: flex-start; }
.edleft { width: 1040px; margin-right: 10px; }
.models { height: 309px; background: #fff; }
.models .thead { height: 18px; grid-template-columns: 162px 142px 197px 1fr; border-right: 1px solid #999; }
.mrow { display: grid; grid-template-columns: 165px 142px 197px 1fr; height: 16px; }
.mrow span { display: flex; align-items: center; gap: 4px; }
.mrow span:first-child { padding-left: 4px; gap: 3px; }
.actions { display: flex; gap: 8px; padding: 9px 0 0 4px; }
.actions button, .split { width: 88px; height: 20px; }
.actions .split { width: 133px; display: flex; border: 1px solid #a6a6a6; background: linear-gradient(#f1f1f1, #e4e4e4); text-align: center; line-height: 18px; }
.split span { flex: 1; }
.split i { width: 14px; margin: 2px 0; border-left: 1px solid #a0a0a0; padding: 6px 0 0 4px; }

.libbtns { display: flex; gap: 8px; padding: 9px 0 0 9px; }
.libbtns button { width: 64px; height: 23px; }
.libbtns .dis { width: 123px; margin-left: 1px; color: #a3a3a3; border-color: #e6e6e6; background: #efefef; }
.right .combo { margin-left: 8px; width: 276px; flex: none; }
.lib { margin-top: 8px; padding: 0 3px 0 4px; }
.lib span { margin: 0 auto 0 4px; }
.lib svg:last-child { margin: 0 0 2px 7px; }
.mask2 { margin-top: 7px; padding: 0 4px 0 3px; justify-content: space-between; }
.box { width: 276px; border: 1px solid #a0a0a0; background: #fff; flex: none; overflow: hidden; }
.comps { margin: 7px 0 0 8px; height: 119px; display: flex; }
.clist { width: 257px; }
.clist .thead { height: 18px; grid-template-columns: 150px 20px 1fr; border-right: 1px solid #999; }
.clist .thead .sort { margin-right: 9px; }
.crow { display: grid; grid-template-columns: 15px 119px 20px 84px; padding-left: 19px; height: 16px; align-items: center; position: relative; }
.crow::before { content: ""; position: absolute; left: 7px; top: 0; width: 9px; height: 16px; background: repeating-linear-gradient(#888 0 1px, transparent 1px 2px) 0 0/1px 100% no-repeat, repeating-linear-gradient(90deg, #888 0 1px, transparent 1px 2px) 0 8px/9px 1px no-repeat; }
.crow svg { margin-bottom: 2px; }
.crow span { overflow: hidden; height: 16px; }
.crow.sel { background: linear-gradient(90deg, #fff 32px, #f0f0f0 32px); }
.cbar { width: 17px; background: #f0f0f0; display: flex; flex-direction: column; align-items: center; padding: 6px 0; }
.cbar i { width: 15px; height: 17px; background: #cdcdcd; margin: 5px 0 auto; }
.count { margin: 0 0 0 12px; height: 22px; line-height: 14px; }
.rowbox { display: flex; padding-left: 8px; margin-bottom: 5px; flex: none; }
.rowbox .fold { margin: 2px 0 0 2px; }
.sym .box { height: 127px; }
.sym text { font: 14.700px "Liberation Serif", serif; letter-spacing: 0; fill: #000080; }
.mod .box { height: 127px; }
.mod .thead { height: 18px; grid-template-columns: 90px 91px 1fr; border-right: 2px solid #999; }
.modrow { display: grid; grid-template-columns: 17px 60px 91px 90px; padding-left: 16px; height: 16px; align-items: center; }
.modrow.sel { background: linear-gradient(90deg, #fff 32px, #f0f0f0 32px); }
.modrow span { height: 16px; }
.pcb .box { height: 132px; }
.sup .box { height: 132px; }
.sup .thead { height: 31px; grid-template-columns: 80px 81px 81px 1fr; line-height: 13px; border-right: 2px solid #999; }
.sup .thead span { align-items: flex-start; padding-top: 1px; margin-bottom: 0; }
.sup .thead span:last-child { display: block; text-align: right; padding-right: 1px; }
.sup .thead .sort { margin-top: 9px; }
.blank .box { height: 129px; }

.status { height: 23px; display: flex; border-top: 1px solid #d8d8d8; color: #000; }
.pos { width: 87px; padding-left: 5px; line-height: 21px; letter-spacing: -.55px; }
.gridsz { width: 398px; padding-left: 4px; line-height: 21px; letter-spacing: -.4px; }
.status > i { width: 486px; height: 17px; margin-top: 3px; border-left: 1px solid #a0a0a0; }
.status > i + i { width: 0; }
.pbtns { margin-left: auto; display: grid; grid-template-columns: 50px 100px 43px 76px 57px; height: 18px; margin-top: 2px; border: 1px solid #ccc; border-left: 0; background: #fafafa; }
.pbtns span, .gt { color: #666; text-align: center; border-left: 1px solid #ccc; line-height: 16px; }
.gt { width: 18px; height: 18px; margin: 2px 4px 0; border: 1px solid #ccc; background: #fafafa; font-size: 9px; }
```
